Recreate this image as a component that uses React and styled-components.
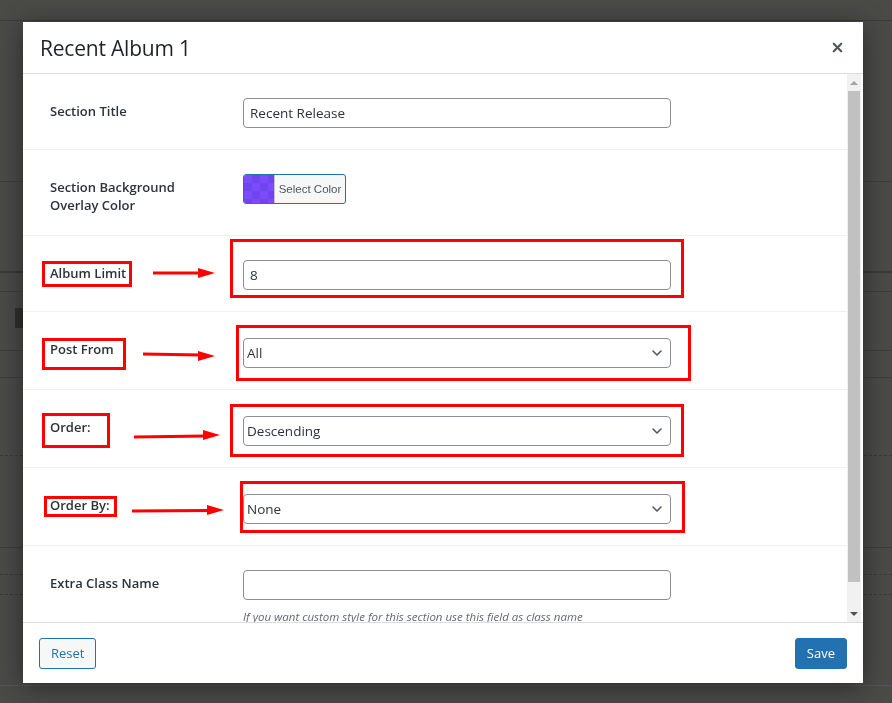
import styled, { createGlobalStyle } from "styled-components";
import { ChevronDown, X } from "lucide-react";

const GlobalStyle = createGlobalStyle`
  * {
    box-sizing: border-box;
  }

  html,
  body {
    margin: 0;
    height: 703px;
    overflow: hidden;
    background: #4a4a47;
    font-family: "Open Sans", "Noto Sans", Arial, sans-serif;
  }
`;

const PageBehind = styled.div`
  display: flex;
  flex-direction: column;
  height: 703px;
`;

const Stripe = styled.div`
  height: ${({ $h }) => $h}px;
  flex-shrink: 0;
  border-bottom: ${({ $line }) => $line || "1px solid #3e3e3c"};
`;

const DarkBlock = styled.div`
  width: 8px;
  height: 20px;
  margin: 16px 0 0 15px;
  background: #2f2f2e;
`;

const Modal = styled.div`
  position: fixed;
  left: 23px;
  top: 22px;
  width: 840px;
  height: 661px;
  background: #fff;
  display: flex;
  flex-direction: column;
  box-shadow: 0 4px 24px rgba(0, 0, 0, 0.45);
`;

const Header = styled.header`
  height: 52px;
  flex-shrink: 0;
  display: flex;
  align-items: center;
  justify-content: space-between;
  padding: 0 18px 0 17px;
  border-bottom: 1px solid #dcdcde;
`;

const Title = styled.h1`
  margin: 0;
  font-size: 21px;
  font-weight: 400;
  color: #1d2327;
  letter-spacing: -0.2px;
`;

const CloseButton = styled.button`
  border: 0;
  background: none;
  padding: 0;
  display: flex;
  color: #50575e;
  cursor: pointer;
`;

const Body = styled.div`
  flex: 1;
  min-height: 0;
  display: flex;
  padding-right: 2px;
`;

const Content = styled.div`
  flex: 1;
  overflow: hidden;
`;

const ScrollTrack = styled.div`
  width: 14px;
  flex-shrink: 0;
  display: flex;
  flex-direction: column;
  align-items: center;
  background: #f1f1f1;
`;

const ScrollArrow = styled.div`
  height: 17px;
  width: 100%;
  display: flex;
  align-items: center;
  justify-content: center;
  flex-shrink: 0;

  &::before {
    content: "";
    border-left: 4px solid transparent;
    border-right: 4px solid transparent;
    ${({ $down }) =>
      $down
        ? "border-top: 4px solid #505050;"
        : "border-bottom: 4px solid #a3a3a3;"}
  }
`;

const ScrollThumb = styled.div`
  width: 12px;
  height: 491px;
  flex-shrink: 0;
  background: #c1c1c1;
`;

const ScrollGap = styled.div`
  flex: 1;
`;

const Row = styled.div`
  position: relative;
  display: flex;
  align-items: flex-start;
  padding: 24px 27px 21px;
  border-bottom: ${({ $last }) => ($last ? "0" : "1px solid #f0f0f1")};
`;

const Label = styled.label`
  width: 193px;
  flex-shrink: 0;
  margin-top: 4px;
  font-size: 13px;
  line-height: 18px;
  font-weight: 600;
  color: #2c3338;
`;

const Field = styled.div`
  width: 428px;
  display: flex;
  flex-direction: column;
  margin-top: ${({ $offset }) => $offset || 0}px;
`;

const TextInput = styled.input`
  width: 100%;
  height: 30px;
  border: 1px solid #8c8f94;
  border-radius: 4px;
  padding: 0 6px;
  font-family: inherit;
  font-size: 13.5px;
  color: #2c3338;
  background: #fff;
`;

const SelectWrap = styled.div`
  position: relative;
  width: 100%;
`;

const Select = styled.select`
  appearance: none;
  width: 100%;
  height: 30px;
  border: 1px solid #8c8f94;
  border-radius: 4px;
  padding: 0 24px 0 3px;
  font-family: inherit;
  font-size: 13.5px;
  color: #2c3338;
  background: #fff;
`;

const Chevron = styled(ChevronDown)`
  position: absolute;
  right: 6px;
  top: 7px;
  color: #50575e;
  pointer-events: none;
`;

const ColorButton = styled.button`
  display: flex;
  align-items: stretch;
  width: 103px;
  height: 30px;
  padding: 0;
  border: 1px solid #2271b1;
  border-radius: 3px;
  overflow: hidden;
  background: #f6f7f7;
  cursor: pointer;
`;

const Swatch = styled.span`
  width: 31px;
  background-color: #7c4cfa;
  background-image: linear-gradient(45deg, #7145ee 25%, transparent 25%, transparent 75%, #7145ee 75%),
    linear-gradient(45deg, #7145ee 25%, transparent 25%, transparent 75%, #7145ee 75%);
  background-size: 16px 16px;
  background-position: 0 0, 8px 8px;
  border-right: 1px solid #c3c4c7;
`;

const ColorText = styled.span`
  flex: 1;
  display: flex;
  align-items: center;
  justify-content: center;
  font-family: inherit;
  font-size: 11.5px;
  color: #50575e;
`;

const Hint = styled.p`
  margin: 9px 0 0;
  font-size: 11.5px;
  font-style: italic;
  color: #646970;
`;

const MarkBox = styled.div`
  position: absolute;
  border: 3px solid #f00;
  pointer-events: none;
`;

const ArrowSvg = styled.svg`
  position: absolute;
  overflow: visible;
  pointer-events: none;
`;

const Footer = styled.footer`
  height: 61px;
  flex-shrink: 0;
  display: flex;
  align-items: center;
  justify-content: space-between;
  padding: 0 16px;
  border-top: 1px solid #dcdcde;
`;

const Button = styled.button`
  height: 31px;
  padding: 0 11px;
  border-radius: 3px;
  font-family: inherit;
  font-size: 13px;
  cursor: pointer;
  border: 1px solid #2271b1;
  color: ${({ $primary }) => ($primary ? "#fff" : "#2271b1")};
  background: ${({ $primary }) => ($primary ? "#2271b1" : "#f6f7f7")};
`;

const stripes = [
  { h: 21, line: "1px solid #3a3a38" },
  { h: 161 },
  { h: 91, line: "2px solid #393937" },
  { h: 19 },
  { h: 59 },
  { h: 27 },
  { h: 78, line: "1px dashed #3a3a38" },
  { h: 92 },
  { h: 27, line: "1px dashed #3a3a38" },
  { h: 20, line: "1px dashed #3a3a38" },
  { h: 91, line: "1px solid #555" },
];

// red annotation marks drawn over the screenshot, relative to each row
const marks = {
  limit: {
    label: { left: 19, top: 25, width: 90, height: 26 },
    arrow: { left: 130, top: 31, width: 62, y1: 6, y2: 6 },
    field: { left: 207, top: 3, width: 454, height: 59 },
  },
  from: {
    label: { left: 19, top: 26, width: 84, height: 32 },
    arrow: { left: 120, top: 37, width: 72, y1: 5, y2: 7 },
    field: { left: 213, top: 13, width: 455, height: 56 },
  },
  order: {
    label: { left: 19, top: 23, width: 68, height: 35 },
    arrow: { left: 111, top: 40, width: 86, y1: 7, y2: 5 },
    field: { left: 207, top: 14, width: 454, height: 53 },
  },
  orderBy: {
    label: { left: 21, top: 28, width: 73, height: 21 },
    arrow: { left: 109, top: 37, width: 92, y1: 6, y2: 5 },
    field: { left: 217, top: 13, width: 445, height: 52 },
  },
};

function Arrow({ left, top, width, y1, y2 }) {
  return (
    <ArrowSvg
      style={{ left, top }}
      width={width}
      height="12"
      viewBox={`0 0 ${width} 12`}
    >
      <line
        x1="0"
        y1={y1}
        x2={width - 14}
        y2={(y1 + y2) / 2}
        stroke="#f00"
        strokeWidth="3"
      />
      <polygon
        points={`${width - 17},${y2 - 5} ${width},${y2} ${width - 17},${y2 + 5}`}
        fill="#f00"
      />
    </ArrowSvg>
  );
}

function Annotation({ mark }) {
  return (
    <>
      <MarkBox style={mark.label} />
      <Arrow {...mark.arrow} />
      <MarkBox style={mark.field} />
    </>
  );
}

function Dropdown({ value, options }) {
  return (
    <SelectWrap>
      <Select defaultValue={value}>
        {options.map((o) => (
          <option key={o}>{o}</option>
        ))}
      </Select>
      <Chevron size={16} strokeWidth={2.4} />
    </SelectWrap>
  );
}

export default function App() {
  return (
    <>
      <GlobalStyle />
      <PageBehind>
        {stripes.map((s, i) => (
          <Stripe key={i} $h={s.h} $line={s.line}>
            {i === 4 && <DarkBlock />}
          </Stripe>
        ))}
      </PageBehind>

      <Modal>
        <Header>
          <Title>Recent Album 1</Title>
          <CloseButton aria-label="Close">
            <X size={15} strokeWidth={3.4} />
          </CloseButton>
        </Header>

        <Body>
          <Content>
            <Row>
              <Label>Section Title</Label>
              <Field>
                <TextInput defaultValue="Recent Release" />
              </Field>
            </Row>

            <Row>
              <Label>
                Section Background
                <br />
                Overlay Color
              </Label>
              <Field>
                <ColorButton>
                  <Swatch />
                  <ColorText>Select Color</ColorText>
                </ColorButton>
              </Field>
            </Row>

            <Row>
              <Label>Album Limit</Label>
              <Field>
                <TextInput defaultValue="8" />
              </Field>
              <Annotation mark={marks.limit} />
            </Row>

            <Row>
              <Label>Post From</Label>
              <Field $offset={2}>
                <Dropdown value="All" options={["All", "Category", "Tag"]} />
              </Field>
              <Annotation mark={marks.from} />
            </Row>

            <Row>
              <Label>Order:</Label>
              <Field $offset={2}>
                <Dropdown value="Descending" options={["Ascending", "Descending"]} />
              </Field>
              <Annotation mark={marks.order} />
            </Row>

            <Row>
              <Label>Order By:</Label>
              <Field $offset={2}>
                <Dropdown value="None" options={["None", "Date", "Title", "Random"]} />
              </Field>
              <Annotation mark={marks.orderBy} />
            </Row>

            <Row $last>
              <Label>Extra Class Name</Label>
              <Field>
                <TextInput />
                <Hint>If you want custom style for this section use this field as class name</Hint>
              </Field>
            </Row>
          </Content>

          <ScrollTrack aria-hidden="true">
            <ScrollArrow />
            <ScrollThumb />
            <ScrollGap />
            <ScrollArrow $down />
          </ScrollTrack>
        </Body>

        <Footer>
          <Button>Reset</Button>
          <Button $primary>Save</Button>
        </Footer>
      </Modal>
    </>
  );
}
